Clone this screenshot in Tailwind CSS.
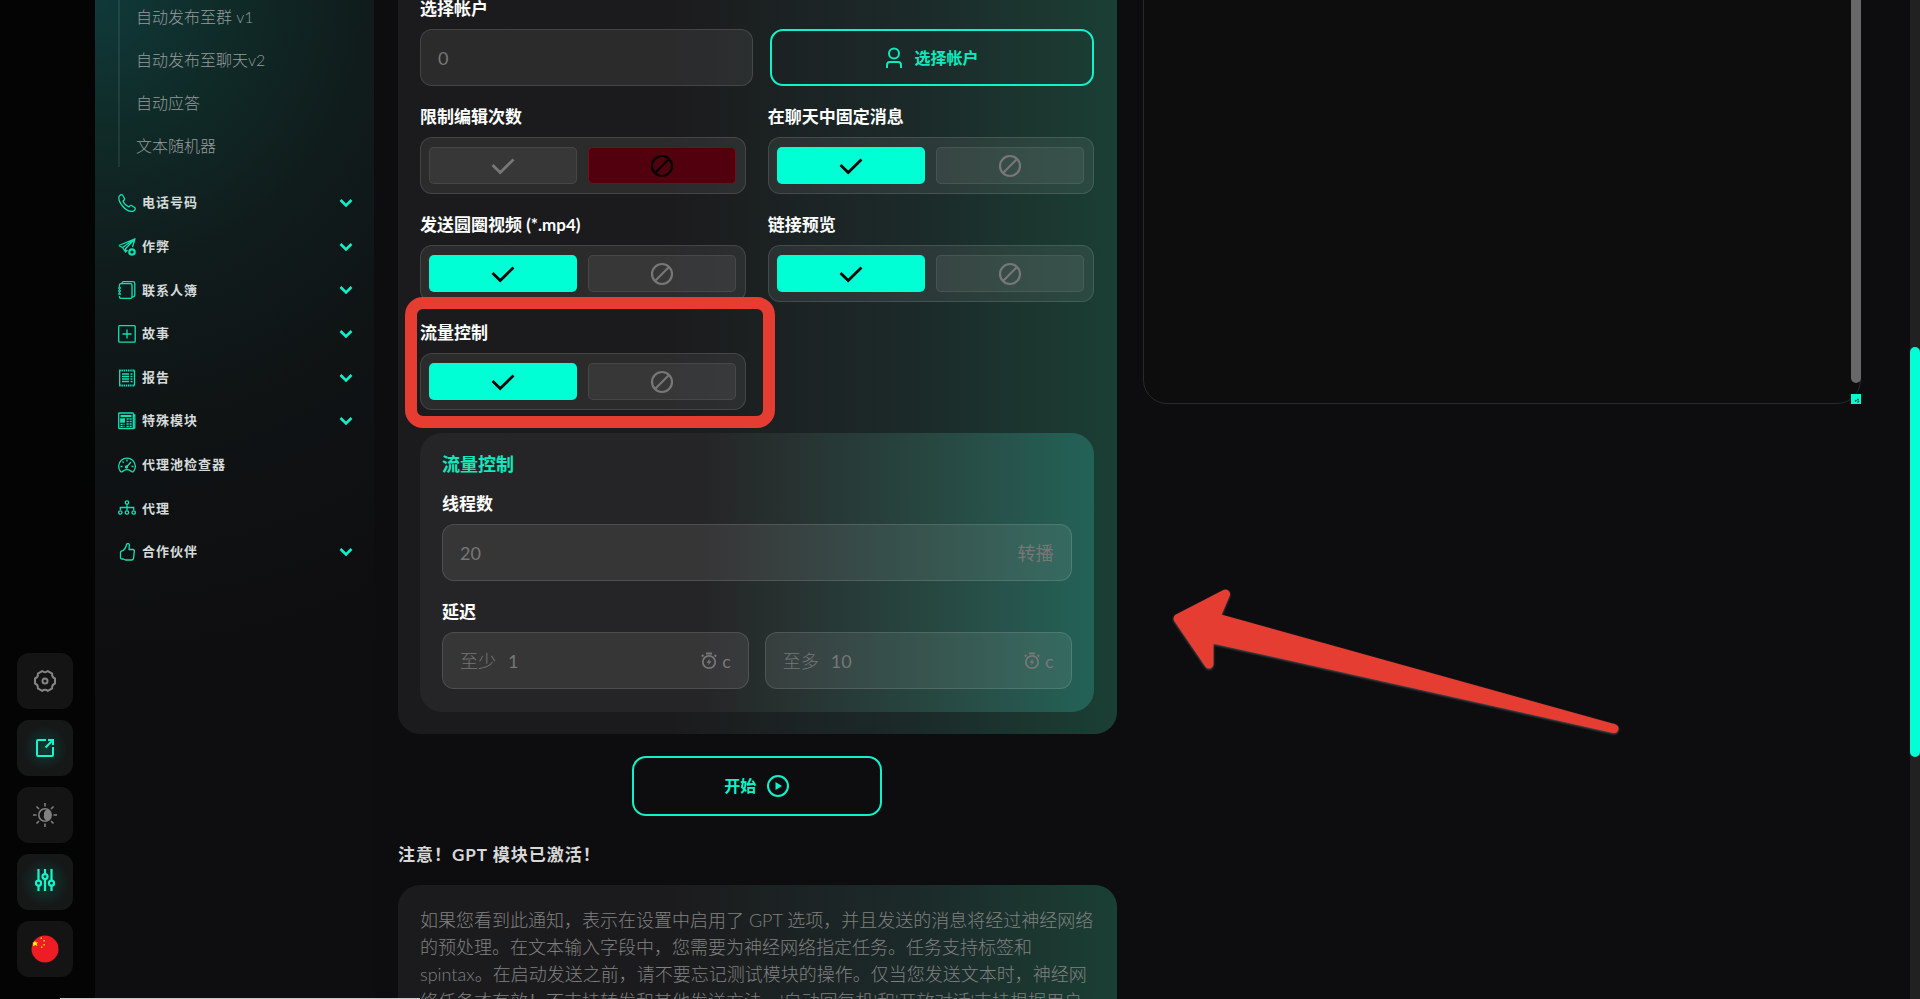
<!doctype html>
<html lang="zh-CN">
  <head>
    <meta charset="UTF-8" />
    <meta name="viewport" content="width=device-width, initial-scale=1.0" />
    <title>自动发布</title>
    <script src="https://cdn.jsdelivr.net/npm/@tailwindcss/browser@4"></script>
  </head>
  <body class="bg-[#0d0d0f] font-[Lato,'Noto_Sans_CJK_SC',sans-serif] text-white">
    <!-- shared icons -->
    <svg class="hidden">
      <symbol id="check" viewBox="0 0 24 24" fill="none" stroke="currentColor" stroke-width="2.800">
        <path d="M1.500 11 9.200 18.500 22.500 5.500" />
      </symbol>
      <symbol id="ban" viewBox="0 0 24 24" fill="none" stroke="currentColor" stroke-width="2.200">
        <circle cx="12" cy="12" r="10" />
        <path d="M5 19 19 5" />
      </symbol>
      <symbol id="chevron" viewBox="0 0 14 10" fill="none" stroke="currentColor" stroke-width="2.600">
        <path d="M1.500 2 7 7.500 12.500 2" />
      </symbol>
      <symbol id="timer" viewBox="0 0 18 18" fill="none" stroke="currentColor" stroke-width="1.800">
        <circle cx="9" cy="10" r="6.200" />
        <path d="M6 1.500h6M1.800 4.500 3.500 3M16.200 4.500 14.500 3" />
        <path d="M9.800 6.500 6.500 10.800h2.300L8.200 13.500l3.300-4.300H9.200z" fill="currentColor" stroke="none" />
      </symbol>
    </svg>

    <div class="relative flex h-screen overflow-hidden">
      <!-- rail -->
      <div class="flex w-[95px] shrink-0 flex-col justify-end gap-[11px] bg-[#040404] pb-[22px] pl-[17px]">
        <button aria-label="设置" class="flex size-14 items-center justify-center rounded-xl bg-[#141414] text-[#858585]">
          <svg class="size-6" viewBox="0 0 24 24" fill="none" stroke="currentColor" stroke-width="2" stroke-linejoin="round">
            <path d="M22 9.500V14.500Q18.500 16 19.200 19.400L14.800 21.900Q12 19.500 9.200 21.900L4.800 19.400Q5.500 16 2 14.500V9.500Q5.500 8 4.800 4.600L9.200 2.100Q12 4.500 14.800 2.100L19.200 4.600Q18.500 8 22 9.500Z" />
            <circle cx="12" cy="12" r="2.500" />
          </svg>
        </button>
        <button aria-label="打开" class="flex size-14 items-center justify-center rounded-xl bg-[#161818] bg-[radial-gradient(circle,#0c3b32,#161818_55%)] text-[#16f5cb]">
          <svg class="size-5" viewBox="0 0 20 20" fill="none" stroke="currentColor" stroke-width="2">
            <path d="M11 2H3Q2 2 2 3V17Q2 18 3 18H17Q18 18 18 17V9M10.500 9.500 17.500 2.500M13 2H18V7" />
          </svg>
        </button>
        <button aria-label="主题" class="flex size-14 items-center justify-center rounded-xl bg-[#141414] text-[#808080]">
          <svg class="size-6" viewBox="0 0 24 24" fill="none" stroke="currentColor" stroke-width="1.600">
            <circle cx="12" cy="12" r="6.200" />
            <path d="M14.500 6.500a6 6 0 0 1 0 11A4 4 0 0 1 11 12a5 5 0 0 1 3.500-5.500z" fill="currentColor" stroke="none" />
            <path d="M12 0v3.500M12 20.500V24M0 12h3.500M20.500 12H24M3.500 3.500 6 6M18 18l2.500 2.500M3.500 20.500 6 18M18 6l2.500-2.500" />
          </svg>
        </button>
        <button aria-label="调节" class="flex size-14 items-center justify-center rounded-xl bg-[#161818] bg-[radial-gradient(circle,#0c3b32,#161818_60%)] pb-1 text-[#16f5cb]">
          <svg class="size-[22px]" viewBox="0 0 22 22" fill="none" stroke="currentColor" stroke-width="2.200">
            <path d="M4.500 0V11.500M4.500 17V22M11 0V5M11 10.500V22M17.500 0V11.500M17.500 17V22" />
            <circle cx="4.500" cy="14.200" r="2.500" />
            <circle cx="11" cy="7.600" r="2.500" />
            <circle cx="17.500" cy="14.200" r="2.500" />
          </svg>
        </button>
        <button aria-label="中文" class="flex size-14 items-center justify-center rounded-xl bg-[#141414]">
          <svg class="size-7" viewBox="0 0 28 28">
            <circle cx="14" cy="14" r="13.500" fill="#ee1c25" />
            <path d="M3.800 5.500 4.800 7.400 7 7.300 5.600 8.900 6.400 11 4.200 10 2 11.200 2.300 8.800 1.500 7.500 3.200 7.500Z" fill="#ff0" />
            <path d="M9.500 2.500h1.500v1.200H9.500zM12.500 5h1.200v1.500h-1.200zM12.500 9h1.200v1.500h-1.200zM10 11.500h1.500v1.200H10z" fill="#ff0" />
          </svg>
        </button>
      </div>

      <!-- sidebar -->
      <nav class="w-[279px] shrink-0 bg-[radial-gradient(circle_at_0_0,#10393a_0,#0f2b28_130px,#101c1c_270px,#0f1314_430px,#0e0d10_700px)] pr-[21px] pl-[23px]">
        <div class="-mt-[5px] flex flex-col border-l-2 border-white/8 pl-[16px] text-base font-light text-[#959b9b]">
          <a href="#" class="flex h-[43px] items-center">自动发布至群 v1</a>
          <a href="#" class="flex h-[43px] items-center">自动发布至聊天v2</a>
          <a href="#" class="flex h-[43px] items-center">自动应答</a>
          <a href="#" class="flex h-[43px] items-center">文本随机器</a>
        </div>
        <div class="mt-5 flex h-[381px] flex-col justify-between text-[13px] font-bold tracking-[1px] text-[#d5dada]">
          <a href="#" class="flex h-8 items-center gap-[6px]">
            <svg class="size-[18px] text-[#14e0b4]" viewBox="0 0 18 18" fill="none" stroke="currentColor" stroke-width="1.300" stroke-linejoin="round">
              <path d="M1 2.500Q2.500 0 4.500 1L6.500 4.500Q6.800 5.800 5 7Q6.500 11 11 12.800Q12.500 11 13.500 11.500L17 13.800Q18 16 14.500 17.500Q9 17.500 4.500 12Q0 6.500 1 2.500Z" />
            </svg>
            电话号码
            <svg class="ml-auto h-[10px] w-[14px] text-[#10f0c8]"><use href="#chevron" /></svg>
          </a>
          <a href="#" class="flex h-8 items-center gap-[6px]">
            <svg class="size-[18px] text-[#14e0b4]" viewBox="0 0 18 18" fill="none" stroke="currentColor" stroke-width="1.300" stroke-linejoin="round">
              <path d="M.8 7.500 17 .8 14.500 9M.8 7.500 4.500 9.500 17 .8 7.500 10.800V14L9.500 12M4.500 9.500 7.500 14" />
              <circle cx="14" cy="14" r="2.700" stroke-width="2.200" />
            </svg>
            作弊
            <svg class="ml-auto h-[10px] w-[14px] text-[#10f0c8]"><use href="#chevron" /></svg>
          </a>
          <a href="#" class="flex h-8 items-center gap-[6px]">
            <svg class="size-[18px] text-[#14e0b4]" viewBox="0 0 18 18" fill="none" stroke="currentColor" stroke-width="1.300">
              <path d="M1.500 5V4Q1.500 2.700 3 2.700H12.500Q14 2.700 14 4V16Q14 17.400 12.500 17.400H3Q1.500 17.400 1.500 16V15M4 2.500Q4 .7 5.500 .7H15Q16.800 .7 16.800 2.500V14Q16.800 15.700 14.500 16" />
              <path d="M0 7h3M0 10h3M0 13h3M1.500 5v1M1.500 8v1M1.500 11v1" />
            </svg>
            联系人簿
            <svg class="ml-auto h-[10px] w-[14px] text-[#10f0c8]"><use href="#chevron" /></svg>
          </a>
          <a href="#" class="flex h-8 items-center gap-[6px]">
            <svg class="size-[18px] text-[#14e0b4]" viewBox="0 0 18 18" fill="none" stroke="currentColor" stroke-width="1.300">
              <rect x=".7" y=".7" width="16.500" height="16.500" rx="1" />
              <path d="M9 4.500v9M4.500 9h9" />
            </svg>
            故事
            <svg class="ml-auto h-[10px] w-[14px] text-[#10f0c8]"><use href="#chevron" /></svg>
          </a>
          <a href="#" class="flex h-8 items-center gap-[6px]">
            <svg class="size-[18px] text-[#14e0b4]" viewBox="0 0 18 18" fill="none" stroke="currentColor" stroke-width="1.300">
              <path d="M1.700 1.500V16.500M16.500 1.500V16.500" />
              <path d="M1.200 1.500H17M1.200 16.500H17" stroke-width="1.800" stroke-dasharray="1.500 .7" />
              <path d="M4 5h7M4 7.500h7M4 10h7M4 12.500h7M12.500 5H14.500M12.500 7.500H14.500M12.500 10H14.500M12.500 12.500H14.500" />
            </svg>
            报告
            <svg class="ml-auto h-[10px] w-[14px] text-[#10f0c8]"><use href="#chevron" /></svg>
          </a>
          <a href="#" class="flex h-8 items-center gap-[6px]">
            <svg class="size-[18px] text-[#14e0b4]" viewBox="0 0 18 18" fill="none" stroke="currentColor" stroke-width="1.300">
              <path d="M.7 1.500Q.7 1 1.500 1H14.500Q15.300 1 15.300 1.500V16.500H1.500Q.7 16.500 .7 15.500ZM15.300 3H16.800V15.500Q16.800 16.500 15.300 16.500" />
              <path d="M2.500 4H13.500" stroke-width="2.200" />
              <path d="M2.800 7h3.500v3h-3.500z" fill="currentColor" />
              <path d="M8.500 7H13.800M8.500 9.500H13.800M8.500 12H13.800M8.500 14.300H13.800M2.500 12.300H6.500M2.500 14.300H6.500" stroke-dasharray="2.200 .8" />
            </svg>
            特殊模块
            <svg class="ml-auto h-[10px] w-[14px] text-[#10f0c8]"><use href="#chevron" /></svg>
          </a>
          <a href="#" class="flex h-8 items-center gap-[6px]">
            <svg class="size-[18px] text-[#14e0b4]" viewBox="0 0 18 18" fill="none" stroke="currentColor" stroke-width="1.300">
              <path d="M2.500 15.500A8.300 8.300 0 1 1 15.500 15.500Q14 16.500 12.500 14.800Q9 12.500 5.500 14.800Q4 16.500 2.500 15.500Z" />
              <path d="M8 11.500 13 6M9 3.500v2M4.500 5.500l1.200 1.200M2.500 10.500h2M13.500 10.500h2" />
              <circle cx="8.500" cy="11" r="1" />
            </svg>
            代理池检查器
          </a>
          <a href="#" class="flex h-8 items-center gap-[6px]">
            <svg class="size-[18px] text-[#14e0b4]" viewBox="0 0 18 18" fill="none" stroke="currentColor" stroke-width="1.300">
              <circle cx="9" cy="3.500" r="1.700" />
              <path d="M9 5.200V11.500M2.300 11V8.500H15.700V11" />
              <circle cx="2.300" cy="13.500" r="1.700" />
              <circle cx="9" cy="13.500" r="1.700" />
              <circle cx="15.700" cy="13.500" r="1.700" />
            </svg>
            代理
          </a>
          <a href="#" class="flex h-8 items-center gap-[6px]">
            <svg class="size-[18px] text-[#14e0b4]" viewBox="0 0 18 18" fill="none" stroke="currentColor" stroke-width="1.300" stroke-linejoin="round">
              <path d="M2.500 9.500Q2.500 8 4 8Q7.500 6.500 8.500 1.500Q9 .3 10.300 .7Q11.800 1.200 11.300 3L11 6.500H15Q16.800 7 16.200 9L15.500 15.500Q15 17 13.500 17H7.500L5.500 16H4Q2.500 16 2.500 14.500Z" />
            </svg>
            合作伙伴
            <svg class="ml-auto h-[10px] w-[14px] text-[#10f0c8]"><use href="#chevron" /></svg>
          </a>
        </div>
      </nav>

      <main class="relative grid flex-1 grid-cols-2 items-start gap-[26px] pr-[49px] pl-6">
        <div class="min-w-0">
          <form class="-mt-1 rounded-b-[22px] bg-linear-to-r from-[#1b1b1d] from-38% via-[#1b2a29] via-72% to-[#1a3f34] pr-[23px] pb-[22px] pl-[22px]">
            <div class="grid grid-cols-2 gap-x-[22px] gap-y-[18px]">
              <div class="col-span-2">
                <label for="accounts" class="mb-2 block text-[17px] leading-[25px] font-bold">选择帐户</label>
                <div class="grid grid-cols-[333fr_324fr] gap-[17px]">
                  <input id="accounts" placeholder="0" class="h-[57px] min-w-0 rounded-xl border border-white/12 bg-white/7 px-[17px] text-lg placeholder:text-[#777]" />
                  <button type="button" class="flex h-[57px] items-center justify-center gap-3 rounded-[13px] border-2 border-[#10f3ca] text-base font-bold text-[#10e8bd]">
                    <svg class="h-[22px] w-[18px]" viewBox="0 0 18 22" fill="none" stroke="currentColor" stroke-width="2">
                      <circle cx="9" cy="6.500" r="5" />
                      <path d="M2 21V18Q2 15 5 15H13Q16 15 16 18V21" />
                    </svg>
                    选择帐户
                  </button>
                </div>
              </div>

              <fieldset class="min-w-0">
                <legend class="mb-2 text-[17px] leading-[25px] font-bold">限制编辑次数</legend>
                <div class="flex gap-[11px] rounded-xl border border-white/12 bg-white/7 py-[9px] pr-[9px] pl-2">
                  <label class="relative flex h-[37px] flex-1 items-center justify-center rounded-[5px] border border-white/8 bg-white/6 text-[#777] has-checked:border-transparent has-checked:bg-[#00ffd5] has-checked:text-black">
                    <input type="radio" name="edits" aria-label="是" class="sr-only" />
                    <svg class="size-6"><use href="#check" /></svg>
                  </label>
                  <label class="relative flex h-[37px] flex-1 items-center justify-center rounded-[5px] border border-white/8 bg-white/6 text-[#777] has-checked:border-[#70101c] has-checked:bg-[#52000d] has-checked:text-black">
                    <input type="radio" name="edits" aria-label="否" class="sr-only" checked />
                    <svg class="size-6"><use href="#ban" /></svg>
                  </label>
                </div>
              </fieldset>
              <fieldset class="min-w-0">
                <legend class="mb-2 text-[17px] leading-[25px] font-bold">在聊天中固定消息</legend>
                <div class="flex gap-[11px] rounded-xl border border-white/12 bg-white/7 py-[9px] pr-[9px] pl-2">
                  <label class="relative flex h-[37px] flex-1 items-center justify-center rounded-[5px] border border-white/8 bg-white/6 text-[#777] has-checked:border-transparent has-checked:bg-[#00ffd5] has-checked:text-black">
                    <input type="radio" name="pin" aria-label="是" class="sr-only" checked />
                    <svg class="size-6"><use href="#check" /></svg>
                  </label>
                  <label class="relative flex h-[37px] flex-1 items-center justify-center rounded-[5px] border border-white/8 bg-white/6 text-[#777] has-checked:border-[#70101c] has-checked:bg-[#52000d] has-checked:text-black">
                    <input type="radio" name="pin" aria-label="否" class="sr-only" />
                    <svg class="size-6"><use href="#ban" /></svg>
                  </label>
                </div>
              </fieldset>

              <fieldset class="min-w-0">
                <legend class="mb-2 text-[17px] leading-[25px] font-bold">发送圆圈视频 (*.mp4)</legend>
                <div class="flex gap-[11px] rounded-xl border border-white/12 bg-white/7 py-[9px] pr-[9px] pl-2">
                  <label class="relative flex h-[37px] flex-1 items-center justify-center rounded-[5px] border border-white/8 bg-white/6 text-[#777] has-checked:border-transparent has-checked:bg-[#00ffd5] has-checked:text-black">
                    <input type="radio" name="round" aria-label="是" class="sr-only" checked />
                    <svg class="size-6"><use href="#check" /></svg>
                  </label>
                  <label class="relative flex h-[37px] flex-1 items-center justify-center rounded-[5px] border border-white/8 bg-white/6 text-[#777] has-checked:border-[#70101c] has-checked:bg-[#52000d] has-checked:text-black">
                    <input type="radio" name="round" aria-label="否" class="sr-only" />
                    <svg class="size-6"><use href="#ban" /></svg>
                  </label>
                </div>
              </fieldset>
              <fieldset class="min-w-0">
                <legend class="mb-2 text-[17px] leading-[25px] font-bold">链接预览</legend>
                <div class="flex gap-[11px] rounded-xl border border-white/12 bg-white/7 py-[9px] pr-[9px] pl-2">
                  <label class="relative flex h-[37px] flex-1 items-center justify-center rounded-[5px] border border-white/8 bg-white/6 text-[#777] has-checked:border-transparent has-checked:bg-[#00ffd5] has-checked:text-black">
                    <input type="radio" name="preview" aria-label="是" class="sr-only" checked />
                    <svg class="size-6"><use href="#check" /></svg>
                  </label>
                  <label class="relative flex h-[37px] flex-1 items-center justify-center rounded-[5px] border border-white/8 bg-white/6 text-[#777] has-checked:border-[#70101c] has-checked:bg-[#52000d] has-checked:text-black">
                    <input type="radio" name="preview" aria-label="否" class="sr-only" />
                    <svg class="size-6"><use href="#ban" /></svg>
                  </label>
                </div>
              </fieldset>

              <div class="relative">
                <fieldset class="min-w-0">
                  <legend class="mb-2 text-[17px] leading-[25px] font-bold">流量控制</legend>
                  <div class="flex gap-[11px] rounded-xl border border-white/12 bg-white/7 py-[9px] pr-[9px] pl-2">
                    <label class="relative flex h-[37px] flex-1 items-center justify-center rounded-[5px] border border-white/8 bg-white/6 text-[#777] has-checked:border-transparent has-checked:bg-[#00ffd5] has-checked:text-black">
                      <input type="radio" name="flow" aria-label="是" class="sr-only" checked />
                      <svg class="size-6"><use href="#check" /></svg>
                    </label>
                    <label class="relative flex h-[37px] flex-1 items-center justify-center rounded-[5px] border border-white/8 bg-white/6 text-[#777] has-checked:border-[#70101c] has-checked:bg-[#52000d] has-checked:text-black">
                      <input type="radio" name="flow" aria-label="否" class="sr-only" />
                      <svg class="size-6"><use href="#ban" /></svg>
                    </label>
                  </div>
                </fieldset>
                <!-- highlight frame -->
                <div class="pointer-events-none absolute -top-[23px] -right-[29px] -bottom-[18px] -left-[15px] rounded-[18px] border-12 border-[#e63d32]"></div>
              </div>
            </div>

            <section class="mt-[23px] rounded-[22px] bg-linear-to-r from-[#252527] from-42% via-[#27413c] via-70% to-[#236257] px-[22px] pt-[22px] pb-[23px]">
              <h2 class="text-lg leading-[18px] font-bold text-[#10e8bd]">流量控制</h2>
              <label for="threads" class="mt-[18px] mb-2 block text-[17px] leading-[25px] font-bold">线程数</label>
              <div class="flex h-[57px] items-center rounded-xl border border-white/12 bg-white/8 px-[17px] text-lg text-[#777]">
                <input id="threads" placeholder="20" class="min-w-0 flex-1 placeholder:text-[#777]" />
                <span>转播</span>
              </div>
              <label for="delay-min" class="mt-[18px] mb-2 block text-[17px] leading-[25px] font-bold">延迟</label>
              <div class="grid grid-cols-2 gap-4">
                <div class="flex h-[57px] items-center rounded-xl border border-white/12 bg-white/8 px-[17px] text-lg text-[#777]">
                  <span class="mr-3 font-light">至少</span>
                  <input id="delay-min" placeholder="1" class="min-w-0 flex-1 placeholder:text-[#777]" />
                  <svg class="mr-1 size-[18px]"><use href="#timer" /></svg>
                  <span>c</span>
                </div>
                <div class="flex h-[57px] items-center rounded-xl border border-white/12 bg-white/8 px-[17px] text-lg text-[#777]">
                  <span class="mr-3 font-light">至多</span>
                  <input aria-label="至多" placeholder="10" class="min-w-0 flex-1 placeholder:text-[#777]" />
                  <svg class="mr-1 size-[18px]"><use href="#timer" /></svg>
                  <span>c</span>
                </div>
              </div>
            </section>
          </form>

          <button class="mx-auto mt-[22px] flex h-[60px] w-[250px] items-center justify-center gap-[10px] rounded-[14px] border-2 border-[#10f3ca] text-base font-bold text-[#10f3ca]">
            开始
            <svg class="size-6" viewBox="0 0 24 24" fill="none" stroke="currentColor" stroke-width="2">
              <circle cx="12" cy="12" r="10" />
              <path d="M9.500 8v8l6.500-4z" fill="currentColor" stroke="none" />
            </svg>
          </button>

          <h3 class="mt-[27px] text-[17px] leading-6 font-bold tracking-[1px] text-[#d8d8d8]">注意！GPT 模块已激活！</h3>
          <p class="mt-[18px] rounded-[22px] bg-linear-to-r from-[#1b1b1d] from-38% via-[#1b2a29] via-72% to-[#1a3f34] p-[22px] text-lg leading-[27px] font-light text-[#808080]">
            如果您看到此通知，表示在设置中启用了 GPT 选项，并且发送的消息将经过神经网络的预处理。在文本输入字段中，您需要为神经网络指定任务。任务支持标签和 spintax。在启动发送之前，请不要忘记测试模块的操作。仅当您发送文本时，神经网络任务才有效！不支持转发和其他发送方法。'自动回复机'和'开放对话'支持根据用户消息生成回复。
          </p>
        </div>

        <div class="relative -mt-1">
          <textarea aria-label="日志" class="block h-[408px] w-full resize-none rounded-b-3xl border border-[#292929] bg-[#0d0d0d]"></textarea>
          <div class="absolute top-0 right-0 h-[387px] w-[10px] rounded-b-full bg-[#686868]"></div>
          <svg class="absolute right-0 bottom-0 size-[10px] bg-[#00ffd5]" viewBox="0 0 10 10" fill="none" stroke="#0b5a4d" stroke-width="1.500">
            <path d="M4 7.500 5.500 6M6.500 8.500 8 7M6 5.500h2" />
          </svg>
        </div>

        <!-- pointer arrow -->
        <svg class="pointer-events-none absolute top-[585px] left-[796px] h-[154px] w-[454px] drop-shadow-[0_1px_1px_#555]" viewBox="1170 584 454 154">
          <path d="M1178 617.500 1225.500 593 1215.500 616.500 1614 727.500 1209 637 1209 663Z" fill="#e63d32" stroke="#e63d32" stroke-width="9" stroke-linejoin="round" />
        </svg>
      </main>

      <!-- page scrollbar -->
      <div class="w-[10px] shrink-0 bg-[#212121] pt-[347px]">
        <div class="h-[410px] rounded-full bg-[#00ffd5]"></div>
      </div>
      <div class="absolute bottom-0 left-[60px] h-px w-[360px] bg-[#c8c8c8]"></div>
    </div>
  </body>
</html>
